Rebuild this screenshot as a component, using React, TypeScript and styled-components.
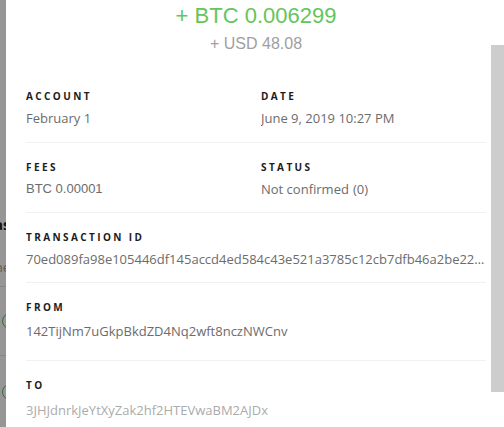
import React from "react";
import styled, { createGlobalStyle } from "styled-components";

const Global = createGlobalStyle`
  html, body { margin: 0; padding: 0; background: #fff; }
  body { font-family: "Open Sans", "Liberation Sans", sans-serif; }
  * { box-sizing: border-box; }
`;

const Screen = styled.div`
  display: flex;
  width: 504px;
  height: 427px;
  overflow: hidden;
`;

const Backdrop = styled.div`
  position: relative;
  flex: 0 0 6px;
  overflow: hidden;
  background: #fff;
`;

const BehindPage = styled.div`
  width: 60px;
  margin-left: -54px;
  display: flex;
  flex-direction: column;
  align-items: flex-end;
  padding-top: 216px;
`;

const BehindTitle = styled.div`
  font-family: "Open Sans", sans-serif;
  font-weight: 700;
  font-size: 14px;
  line-height: 18px;
  color: #222;
  margin-right: -4px;
`;

const BehindSub = styled.div`
  font-family: "Open Sans", sans-serif;
  font-size: 13px;
  line-height: 18px;
  color: #999;
  margin-top: 24px;
  margin-right: -4px;
`;

const BehindRule = styled.div<{ $gap: number }>`
  width: 100%;
  height: 1px;
  background: #e6e6e6;
  margin-top: ${(p) => p.$gap}px;
`;

const BehindCircle = styled.div<{ $gap: number }>`
  width: 16px;
  height: 16px;
  border-radius: 50%;
  border: 1.5px solid #5cb85c;
  margin-top: ${(p) => p.$gap}px;
  margin-right: -12px;
`;

const Overlay = styled.div`
  position: absolute;
  inset: 0;
  background: rgba(0, 0, 0, 0.41);
`;

const Modal = styled.div`
  position: relative;
  flex: 1;
  background: #fff;
  padding: 2px 0 0 20px;
`;

const Content = styled.div`
  width: 460px;
  display: flex;
  flex-direction: column;
`;

const Header = styled.div`
  display: flex;
  flex-direction: column;
  align-items: center;
  gap: 4px;
  margin-bottom: 18px;
  font-family: "Liberation Sans", Arial, sans-serif;
`;

const Amount = styled.div`
  font-size: 22px;
  line-height: 28px;
  color: #66c55a;
`;

const Fiat = styled.div`
  font-size: 16px;
  line-height: 20px;
  color: #a0a0a0;
`;

const Section = styled.div<{ $last?: boolean; $first?: boolean }>`
  display: grid;
  grid-template-columns: 235px 1fr;
  padding: 17px 0 ${(p) => (p.$first ? 15 : 14)}px;
  border-bottom: ${(p) => (p.$last ? "none" : "1px solid #f1f1f1")};
`;

const Field = styled.div<{ $wide?: boolean }>`
  display: flex;
  flex-direction: column;
  gap: 6px;
  min-width: 0;
  grid-column: ${(p) => (p.$wide ? "1 / -1" : "auto")};
`;

const Label = styled.div`
  font-family: "Open Sans", sans-serif;
  font-weight: 700;
  font-size: 10px;
  line-height: 14px;
  letter-spacing: 2.4px;
  color: #1c1c1c;
  text-transform: uppercase;
`;

const Value = styled.div<{
  $tone?: "muted" | "faint";
  $mono?: boolean;
  $padTop?: number;
  $padBottom?: number;
}>`
  font-family: ${(p) => (p.$mono ? `"Liberation Sans", Arial, sans-serif` : `"Open Sans", sans-serif`)};
  font-size: 13px;
  line-height: 18px;
  color: ${(p) => (p.$tone === "faint" ? "#ababab" : "#6c6c6c")};
  white-space: nowrap;
  overflow: hidden;
  text-overflow: ellipsis;
  padding: ${(p) => p.$padTop ?? 0}px 0 ${(p) => p.$padBottom ?? 0}px;
`;

const Conf = styled.span`
  margin-left: 4px;
`;

const Scrollbar = styled.div`
  position: absolute;
  right: 0;
  top: 45px;
  width: 13px;
  height: 347px;
  background: #cdcdcd;
`;

export default function App() {
  return (
    <>
      <Global />
      <Screen>
        <Backdrop>
          <BehindPage>
            <BehindTitle>as</BehindTitle>
            <BehindSub>ne</BehindSub>
            <BehindRule $gap={10} />
            <BehindCircle $gap={26} />
            <BehindRule $gap={26} />
            <BehindCircle $gap={28} />
          </BehindPage>
          <Overlay />
        </Backdrop>
        <Modal>
          <Content>
            <Header>
              <Amount>+ BTC 0.006299</Amount>
              <Fiat>+ USD 48.08</Fiat>
            </Header>
            <Section $first>
              <Field>
                <Label>Account</Label>
                <Value>February 1</Value>
              </Field>
              <Field>
                <Label>Date</Label>
                <Value>June 9, 2019 10:27 PM</Value>
              </Field>
            </Section>
            <Section>
              <Field>
                <Label>Fees</Label>
                <Value $mono>BTC 0.00001</Value>
              </Field>
              <Field>
                <Label>Status</Label>
                <Value>
                  Not confirmed<Conf>(0)</Conf>
                </Value>
              </Field>
            </Section>
            <Section>
              <Field $wide>
                <Label>Transaction ID</Label>
                <Value>70ed089fa98e105446df145accd4ed584c43e521a3785c12cb7dfb46a2be22f1c0a9b7e3</Value>
              </Field>
            </Section>
            <Section>
              <Field $wide>
                <Label>From</Label>
                <Value $padTop={2} $padBottom={6}>
                  142TijNm7uGkpBkdZD4Nq2wft8nczNWCnv
                </Value>
              </Field>
            </Section>
            <Section $last>
              <Field $wide>
                <Label>To</Label>
                <Value $tone="faint" $padTop={3} $padBottom={6}>
                  3JHJdnrkJeYtXyZak2hf2HTEVwaBM2AJDx
                </Value>
              </Field>
            </Section>
          </Content>
          <Scrollbar />
        </Modal>
      </Screen>
    </>
  );
}
